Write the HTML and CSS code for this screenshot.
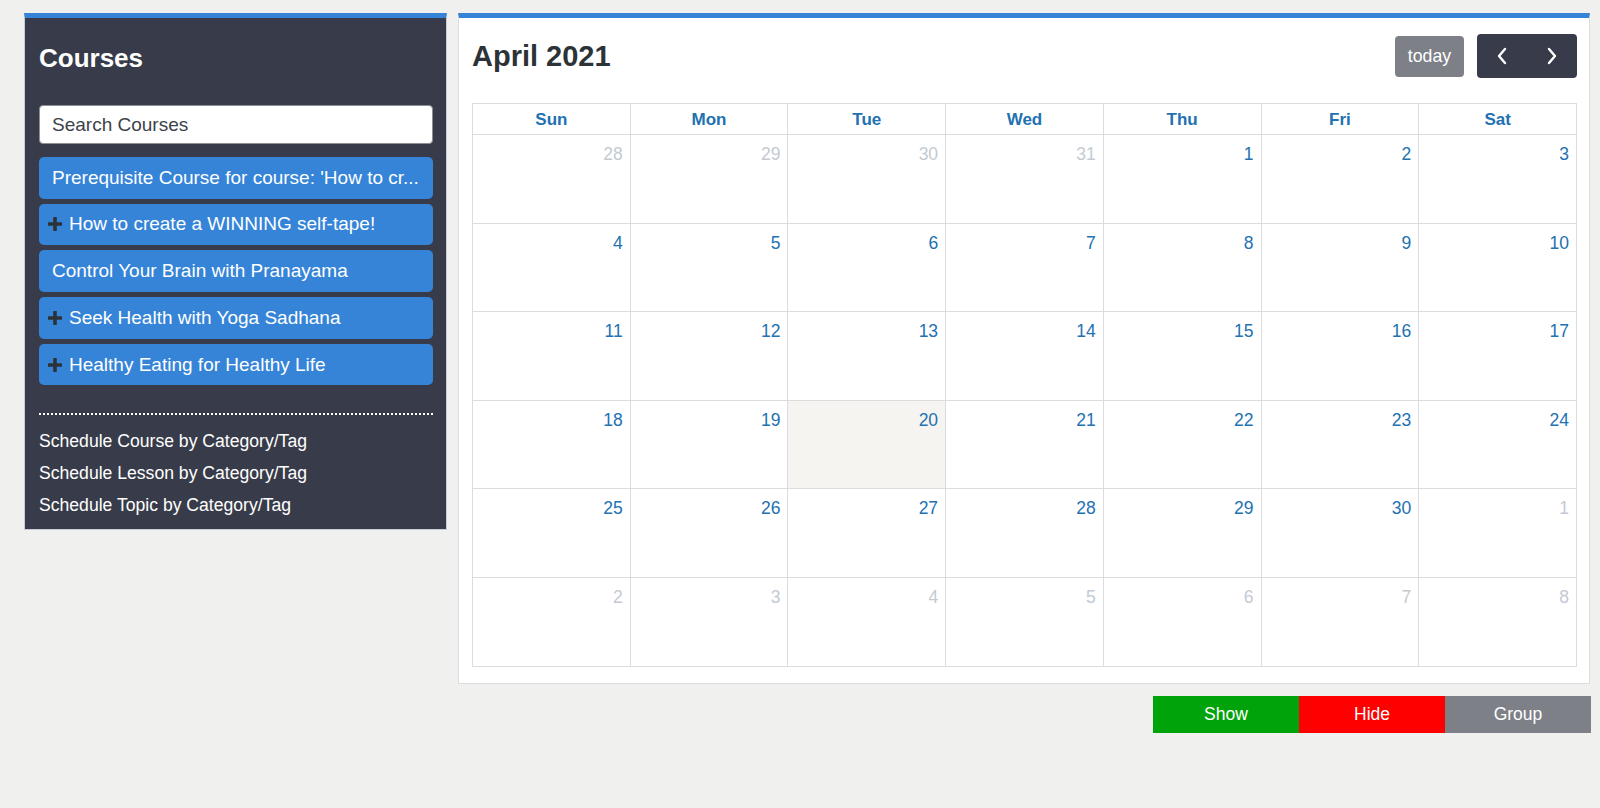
FILE: index.html
```html
<!DOCTYPE html>
<html lang="en">
<head>
    <meta charset="UTF-8">
    <meta name="viewport" content="width=device-width, initial-scale=1.0">
    <title>Course Scheduler</title>
    <link rel="stylesheet" href="styles.css">
</head>
<body>

    <div class="scheduler">

        <aside class="courses">
            <h2>Courses</h2>

            <input type="text" class="search" placeholder="Search Courses">

            <ul class="course-list">
                <li class="course">Prerequisite Course for course: 'How to cr...</li>
                <li class="course has-children">
                    <svg class="plus" width="14" height="14" viewBox="0 0 14 14"><rect x="5.2" y="0" width="3.6" height="14" rx="0.6"/><rect x="0" y="5.2" width="14" height="3.6" rx="0.6"/></svg>
                    How to create a WINNING self-tape!
                </li>
                <li class="course">Control Your Brain with Pranayama</li>
                <li class="course has-children">
                    <svg class="plus" width="14" height="14" viewBox="0 0 14 14"><rect x="5.2" y="0" width="3.6" height="14" rx="0.6"/><rect x="0" y="5.2" width="14" height="3.6" rx="0.6"/></svg>
                    Seek Health with Yoga Sadhana
                </li>
                <li class="course has-children">
                    <svg class="plus" width="14" height="14" viewBox="0 0 14 14"><rect x="5.2" y="0" width="3.6" height="14" rx="0.6"/><rect x="0" y="5.2" width="14" height="3.6" rx="0.6"/></svg>
                    Healthy Eating for Healthy Life
                </li>
            </ul>

            <div class="divider"></div>

            <ul class="schedule-links">
                <li>Schedule Course by Category/Tag</li>
                <li>Schedule Lesson by Category/Tag</li>
                <li>Schedule Topic by Category/Tag</li>
            </ul>
        </aside>

        <main class="main-col">
            <section class="calendar">
                <div class="toolbar">
                    <h1>April 2021</h1>
                    <div class="toolbar-buttons">
                        <button class="btn-today">today</button>
                        <div class="nav-group">
                            <button class="btn-nav">
                                <svg width="12" height="18" viewBox="0 0 12 18"><path d="M9 2 L3 9 L9 16" fill="none" stroke="#fff" stroke-width="2.4" stroke-linecap="round" stroke-linejoin="round"/></svg>
                            </button>
                            <button class="btn-nav">
                                <svg width="12" height="18" viewBox="0 0 12 18"><path d="M3 2 L9 9 L3 16" fill="none" stroke="#fff" stroke-width="2.4" stroke-linecap="round" stroke-linejoin="round"/></svg>
                            </button>
                        </div>
                    </div>
                </div>

                <table class="month">
                    <thead>
                        <tr>
                            <th>Sun</th><th>Mon</th><th>Tue</th><th>Wed</th><th>Thu</th><th>Fri</th><th>Sat</th>
                        </tr>
                    </thead>
                    <tbody>
                        <tr>
                            <td class="other">28</td><td class="other">29</td><td class="other">30</td><td class="other">31</td><td>1</td><td>2</td><td>3</td>
                        </tr>
                        <tr>
                            <td>4</td><td>5</td><td>6</td><td>7</td><td>8</td><td>9</td><td>10</td>
                        </tr>
                        <tr>
                            <td>11</td><td>12</td><td>13</td><td>14</td><td>15</td><td>16</td><td>17</td>
                        </tr>
                        <tr>
                            <td>18</td><td>19</td><td class="today">20</td><td>21</td><td>22</td><td>23</td><td>24</td>
                        </tr>
                        <tr>
                            <td>25</td><td>26</td><td>27</td><td>28</td><td>29</td><td>30</td><td class="other">1</td>
                        </tr>
                        <tr>
                            <td class="other">2</td><td class="other">3</td><td class="other">4</td><td class="other">5</td><td class="other">6</td><td class="other">7</td><td class="other">8</td>
                        </tr>
                    </tbody>
                </table>
            </section>

            <div class="view-actions">
                <button class="btn-show">Show</button>
                <button class="btn-hide">Hide</button>
                <button class="btn-group">Group</button>
            </div>
        </main>

    </div>

</body>
</html>
```

FILE: styles.css
```css
body {
    font-family: "Liberation Sans", Arial, sans-serif;
    margin: 0;
    padding: 0;
    background-color: #f0f0ef;
    color: #2c3338;
}

.scheduler {
    display: flex;
    align-items: flex-start;
    gap: 11px;
    padding: 13px 0 0 24px;
}

/* left column */
.courses {
    width: 423px;
    box-sizing: border-box;
    background-color: #383c4a;
    border: 1px solid #c9ccd4;
    border-top: 5px solid #3584d8;
    padding: 25px 13px 8px 14px;
    color: #fff;
}

.courses h2 {
    margin: 0 0 32px;
    font-size: 26px;
    line-height: 30px;
    font-weight: bold;
}

.search {
    display: block;
    width: 100%;
    height: 39px;
    box-sizing: border-box;
    margin: 0 0 13px;
    padding: 0 12px;
    border: 1px solid #8c8f94;
    border-radius: 4px;
    font-family: inherit;
    font-size: 19px;
    color: #3c434a;
}

.search::placeholder {
    color: #3c434a;
}

.course-list,
.schedule-links {
    list-style: none;
    margin: 0;
    padding: 0;
}

.course {
    display: flex;
    align-items: center;
    height: 41.5px;
    margin-bottom: 5.2px;
    padding: 0 10px 0 13px;
    background-color: #3584d8;
    border-radius: 5px;
    font-size: 19px;
    white-space: nowrap;
}

.course.has-children {
    padding-left: 9px;
}

.plus {
    fill: #2c3338;
    margin-right: 7px;
    flex-shrink: 0;
}

.divider {
    border-top: 2px dotted #fff;
    margin: 28px 0 11px;
}

.schedule-links li {
    font-size: 17.6px;
    line-height: 31.7px;
}

/* right column */
.main-col {
    width: 1132px;
}

.calendar {
    background-color: #fff;
    border: 1px solid #dcdcde;
    border-top: 5px solid #3584d8;
    padding: 16px 12px 16px 13px;
}

.toolbar {
    display: flex;
    justify-content: space-between;
    align-items: center;
    height: 44px;
    margin-bottom: 25px;
}

.toolbar h1 {
    margin: 0;
    font-size: 29px;
    font-weight: bold;
    color: #2c3338;
}

.toolbar-buttons {
    display: flex;
    align-items: center;
    gap: 13px;
}

button {
    font-family: inherit;
    border: none;
    color: #fff;
    cursor: pointer;
}

.btn-today {
    width: 69px;
    height: 41px;
    background-color: #7e8087;
    border-radius: 4px;
    font-size: 17.7px;
}

.nav-group {
    display: flex;
    background-color: #383c4a;
    border-radius: 4px;
}

.btn-nav {
    width: 50px;
    height: 44px;
    background: none;
    display: flex;
    align-items: center;
    justify-content: center;
}

.month {
    width: 100%;
    border-collapse: collapse;
    table-layout: fixed;
}

.month th,
.month td {
    border: 1px solid #dcdcde;
}

.month th {
    height: 31px;
    padding: 2px 0 0;
    box-sizing: border-box;
    font-size: 17px;
    font-weight: bold;
    color: #2271b1;
}

.month td {
    height: 88.6px;
    box-sizing: border-box;
    padding: 9px 7px 0 0;
    vertical-align: top;
    text-align: right;
    font-size: 17.5px;
    color: #2271b1;
}

.month td.other {
    color: #c3cad3;
}

.month td.today {
    background-color: #f5f4f1;
}

.view-actions {
    display: flex;
    justify-content: flex-end;
    margin: 12px -1px 0 0;
}

.view-actions button {
    width: 146px;
    height: 37px;
    font-size: 17.5px;
}

.btn-show {
    background-color: #00a30a;
}

.btn-hide {
    background-color: #ff0000;
}

.btn-group {
    background-color: #7e8087;
}
```
